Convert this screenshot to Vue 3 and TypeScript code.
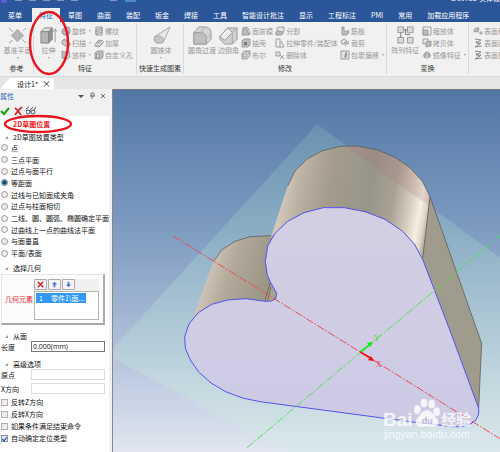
<script setup lang="ts">
import { ref } from 'vue'

interface Shape { d: string; f?: string; s?: string }
interface Tool { label: string; icon: string; menu?: boolean }
interface Group { name: string; big: Tool[]; columns: Tool[][] }

const menus = ['菜单', '特征', '草图', '曲面', '装配', '钣金', '焊接', '工具', '智能设计批注', '显示', '工程标注', 'PMI', '常用', '加载应用程序']
const activeMenu = ref('特征')

const dark = '#9c9c9c'
const mid = '#bcbcbc'
const light = '#e4e4e4'

// Small icons use a 10-unit box, large ones a 20-unit box.
const icons: Record<string, Shape[]> = {
  plane: [
    { d: 'M10 3L17 10L10 17L3 10Z', f: '#b2b2b2' },
    { d: 'M1 2L5 6M15 14L19 18M19 2L16 5M5 15L1 18', s: '#999' },
    { d: 'M6 10H14M10 6V14', s: '#bcbcbc' },
  ],
  extrude: [
    { d: 'M2 6L6 2H14L10 6Z', f: '#dedede', s: '#888' },
    { d: 'M2 6H10V18H2Z', f: '#b5b5b5', s: '#888' },
    { d: 'M10 6L14 2V14L10 18Z', f: '#929292', s: '#888' },
    { d: 'M17 17V4M15 6L17 3L19 6', s: '#999' },
  ],
  cone: [
    { d: 'M19 1L3 11Q1 16 5 18Q10 19 13 15Z', f: '#e6e6e6', s: '#aaa' },
    { d: 'M3 11Q8 9 11 12Q13 14 12 17Q8 20 4 17Q1 14 3 11Z', f: '#c6c6c6', s: '#aaa' },
  ],
  fillet: [
    { d: 'M1 7L6 1H14Q19 2 19 8V14L14 19H1Z', f: '#d6d6d6', s: '#999' },
    { d: 'M1 7H8Q14 7 14 13V19H1Z', f: '#c0c0c0', s: '#999' },
    { d: 'M8 7L12 2M14 13L19 8', s: '#aaa' },
  ],
  chamfer: [
    { d: 'M1 11L9 2H19V14L14 19H6L1 14Z', f: '#d0d0d0', s: '#999' },
    { d: 'M1 11L9 2L14 7L6 15Z', f: '#f0f0f0', s: '#999' },
    { d: 'M14 7V19M14 7L19 2', s: '#a5a5a5' },
  ],
  pattern: [
    { d: 'M2 1H8V7H2ZM12 1H18V7H12ZM2 12H8V18H2ZM12 12H18V18H12Z', f: '#dadada', s: '#999' },
    { d: 'M8 4H12M5 7V12M10 4V9H15', s: '#777' },
  ],
  revolve: [
    { d: 'M1 4L4 1H8L9 4V7L7 9H3L1 7Z', f: mid, s: dark },
    { d: 'M3 5H7V8H3Z', f: light, s: dark },
  ],
  sweep: [
    { d: 'M1 3Q3 0 5 2L9 5Q10 8 7 9L3 7Q0 6 1 3Z', f: mid, s: dark },
    { d: 'M2 4Q5 4 6 8', s: light },
  ],
  loft: [
    { d: 'M1 1L4 2L8 1L9 7L5 9L1 8Z', f: mid, s: dark },
    { d: 'M5 3L7 2L8 7L5 8Z', f: light },
  ],
  thread: [
    { d: 'M2 1H8V9H2Z', f: light, s: dark },
    { d: 'M1 4L9 2M1 6L9 4M1 8L9 6', s: dark },
  ],
  thicken: [
    { d: 'M1 6L5 2L9 3L9 5L5 9L1 8Z', f: mid, s: dark },
    { d: 'M1 6L5 7L9 3', s: light },
  ],
  hole: [
    { d: 'M1 3L4 1H9V7L7 9H1Z', f: mid, s: dark },
    { d: 'M2 4H6V8H2Z', f: dark },
    { d: 'M3 5H5V7H3Z', f: light },
  ],
  draft: [
    { d: 'M2 2L5 1L8 9H1Z', f: mid, s: dark },
    { d: 'M6 1Q9 4 9 9', s: dark },
  ],
  shell: [
    { d: 'M1 3L3 1H9V7L7 9H1Z', f: mid, s: dark },
    { d: 'M3 4H6V7H3Z', f: '#777' },
  ],
  boolean: [
    { d: 'M3 1H9V6L6 9H1V4Z', f: light, s: dark },
    { d: 'M2 4H6V7H2ZM4 2H8V5', s: dark },
  ],
  split: [
    { d: 'M3 1H9V5L7 7H2V3Z', f: light, s: dark },
    { d: 'M1 6Q4 4 8 6V8L5 9H1Z', f: mid, s: dark },
  ],
  stretch: [{ d: 'M1 1H5V9H1ZM6 3L9 9H5', s: dark }],
  remove: [
    { d: 'M1 2H5V6H1Z', f: light, s: dark },
    { d: 'M5 5L9 9M9 5L5 9', s: dark },
  ],
  rib: [{ d: 'M2 1H4V5L6 6L8 4L9 7L7 9H2Z', f: mid, s: dark }],
  trim: [
    { d: 'M1 3L4 1L7 3L5 6L2 6Z', f: light, s: dark },
    { d: 'M4 4L9 6M5 8L9 3', s: dark },
  ],
  wrap: [
    { d: 'M1 1H9V9H1Z', f: light, s: dark },
    { d: 'M5 3L7 2V7L4 8Z', f: dark },
  ],
  scale: [
    { d: 'M1 1H9V9H1Z', s: dark },
    { d: 'M1 4H6V9H1Z', f: mid, s: dark },
  ],
  copy: [
    { d: 'M1 1H6V6H1Z', f: light, s: dark },
    { d: 'M4 4L9 3V8L4 9Z', f: mid, s: dark },
  ],
  mirror: [
    { d: 'M5 1V9', s: dark },
    { d: 'M4 2Q0 5 3 8ZM6 2Q10 5 7 8Z', f: mid, s: dark },
  ],
  surface: [
    { d: 'M1 4Q2 1 6 2L5 6Q2 5 1 6Z', f: mid, s: dark },
    { d: 'M8 5V9M6 7H10', s: dark },
  ],
  offset: [{ d: 'M2 1L8 2L3 5L8 5L2 9L9 8M3 3L7 7', s: '#8c8c8c' }],
}

const groups: Group[] = [
  { name: '参考', big: [{ label: '基准平面', icon: 'plane', menu: true }], columns: [] },
  {
    name: '特征',
    big: [{ label: '拉伸', icon: 'extrude', menu: true }],
    columns: [
      [{ label: '旋转', icon: 'revolve', menu: true }, { label: '扫描', icon: 'sweep', menu: true }, { label: '放样', icon: 'loft', menu: true }],
      [{ label: '螺纹', icon: 'thread' }, { label: '加厚', icon: 'thicken' }, { label: '自定义孔', icon: 'hole' }],
    ],
  },
  { name: '快速生成图素', big: [{ label: '圆锥体', icon: 'cone', menu: true }], columns: [] },
  {
    name: '修改',
    big: [{ label: '圆角过渡', icon: 'fillet' }, { label: '边倒角', icon: 'chamfer' }],
    columns: [
      [{ label: '面拔模', icon: 'draft' }, { label: '抽壳', icon: 'shell' }, { label: '布尔', icon: 'boolean' }],
      [{ label: '分割', icon: 'split' }, { label: '拉伸零件/装配体', icon: 'stretch' }, { label: '删除体', icon: 'remove' }],
      [{ label: '筋板', icon: 'rib' }, { label: '裁剪', icon: 'trim' }, { label: '包裹偏移', icon: 'wrap', menu: true }],
    ],
  },
  {
    name: '变换',
    big: [{ label: '阵列特征', icon: 'pattern' }],
    columns: [[{ label: '缩放体', icon: 'scale' }, { label: '拷贝体', icon: 'copy' }, { label: '镜像特征', icon: 'mirror', menu: true }]],
  },
  {
    name: '',
    big: [],
    columns: [[{ label: '表面移', icon: 'surface' }, { label: '表面匹', icon: 'offset' }, { label: '表面替', icon: 'offset' }]],
  },
]

const placements = ['点', '三点平面', '过点与面平行', '等距面', '过线与已知面成夹角', '过点与柱面相切', '二线、圆、圆弧、椭圆确定平面', '过曲线上一点的曲线法平面', '与面垂直', '平面/表面']
const placement = ref('等距面')
const length = ref('0.000(mm)')
const origin = ref('')
const xDirection = ref('')
const options = ref([
  { label: '反转Z方向', on: false },
  { label: '反转X方向', on: false },
  { label: '如果条件满足结束命令', on: false },
  { label: '自动确定定位类型', on: true },
])
</script>

<template>
  <div class="app">
    <header class="titlebar">
      <span class="orb"></span>
      <span class="quick"><i></i><i></i><i></i><i></i><i></i></span>
      <span class="quick far"><i></i><i class="lit"></i></span>
      <span class="title">CAXA 3D 实体设</span>
    </header>

    <nav class="menus">
      <button v-for="m in menus" :key="m" :class="{ active: m === activeMenu }" @click="activeMenu = m">{{ m }}</button>
    </nav>

    <section class="ribbon">
      <div v-for="(g, gi) in groups" :key="gi" class="group">
        <div class="tools">
          <button v-for="b in g.big" :key="b.label" class="big">
            <svg viewBox="0 0 20 20"><path v-for="(p, i) in icons[b.icon]" :key="i" :d="p.d" :fill="p.f ?? 'none'" :stroke="p.s ?? 'none'" /></svg>
            <span>{{ b.label }}</span>
            <span v-if="b.menu" class="caret"></span>
          </button>
          <div v-for="(c, ci) in g.columns" :key="ci" class="column">
            <button v-for="t in c" :key="t.label" class="small">
              <svg viewBox="0 0 10 10"><path v-for="(p, i) in icons[t.icon]" :key="i" :d="p.d" :fill="p.f ?? 'none'" :stroke="p.s ?? 'none'" /></svg>
              <span>{{ t.label }}</span>
              <span v-if="t.menu" class="caret"></span>
            </button>
          </div>
        </div>
        <div class="group-name">{{ g.name }}</div>
      </div>
      <svg class="mark mark-tool" viewBox="0 0 42 66"><ellipse cx="21" cy="33" rx="19" ry="31" /></svg>
    </section>

    <div class="documents">
      <div class="document"><span>设计1*</span><button aria-label="关闭文档">×</button></div>
    </div>

    <main class="work">
      <aside class="panel">
        <div class="panel-head">
          <h1>属性</h1>
          <button aria-label="选项"><svg viewBox="0 0 8 8"><path d="M1 3H7L4 6Z" fill="#555" /></svg></button>
          <button aria-label="固定"><svg viewBox="0 0 8 8"><path d="M3 1H6V4H3ZM2 4H7M4 4V7" fill="none" stroke="#777" /></svg></button>
          <button aria-label="关闭"><svg viewBox="0 0 8 8"><path d="M2 2L6 6M6 2L2 6" fill="none" stroke="#666" /></svg></button>
        </div>
        <div class="actions">
          <button aria-label="确定"><svg viewBox="0 0 10 10"><path d="M1 5L4 8L9 2" fill="none" stroke="#16a016" stroke-width="2" /></svg></button>
          <button aria-label="取消"><svg viewBox="0 0 10 10"><path d="M2 2Q5 4 8 9M9 1Q5 4 2 9" fill="none" stroke="#cf2a2a" stroke-width="1.6" /></svg></button>
          <button aria-label="预览"><svg viewBox="0 0 10 10"><path d="M0 3L3 1M2 4A2 2 0 1 0 2 8A2 2 0 1 0 2 4M7 4A2 2 0 1 0 7 8A2 2 0 1 0 7 4M3 5H5M8 4L10 1M4 4L7 1" fill="none" stroke="#456" /></svg></button>
        </div>

        <div class="content">
          <h2 class="mode">2D草图位置
            <svg class="mark mark-mode" viewBox="0 0 70 20"><ellipse cx="35" cy="10" rx="33" ry="8" /></svg>
          </h2>
          <h3>2D草图放置类型</h3>
          <div class="radios">
            <label v-for="p in placements" :key="p"><input v-model="placement" type="radio" name="placement" :value="p" /><span>{{ p }}</span></label>
          </div>

          <h3 class="pick-title">选择几何</h3>
          <div class="pick">
            <span class="pick-label">几何元素</span>
            <div class="pick-main">
              <div class="pick-bar">
                <button aria-label="删除"><svg viewBox="0 0 10 10"><path d="M2 2L8 8M8 2L2 8" fill="none" stroke="#e01818" stroke-width="1.5" /></svg></button>
                <button aria-label="上移"><svg viewBox="0 0 10 10"><path d="M5 2L8 5H6V8H4V5H2Z" fill="#4a78d8" /></svg></button>
                <button aria-label="下移"><svg viewBox="0 0 10 10"><path d="M5 8L8 5H6V2H4V5H2Z" fill="#4a78d8" /></svg></button>
              </div>
              <ul role="listbox" aria-label="几何元素"><li role="option" aria-selected="true"><span>1</span><span>零件1\面...</span></li></ul>
            </div>
          </div>

          <h3 class="from-title">从面</h3>
          <label class="field"><span>长度</span><input v-model="length" type="text" class="strong" /></label>
          <h3 class="more-title">高级选项</h3>
          <label class="field"><span>原点</span><input v-model="origin" type="text" /></label>
          <label class="field second"><span>X方向</span><input v-model="xDirection" type="text" /></label>
          <div class="checks">
            <label v-for="o in options" :key="o.label"><input v-model="o.on" type="checkbox" /><span>{{ o.label }}</span></label>
          </div>
        </div>
      </aside>

      <div class="viewport">
        <svg viewBox="24 0 1161 1086" preserveAspectRatio="xMinYMin slice">
          <defs>
            <linearGradient id="sky" x1="0" y1="0" x2="0" y2="1">
              <stop offset="0" stop-color="#5277a5" />
              <stop offset=".4" stop-color="#809dc2" />
              <stop offset=".7" stop-color="#afbfd9" />
              <stop offset="1" stop-color="#e1e6f0" />
            </linearGradient>
            <linearGradient id="sheet" x1="0" y1="0" x2="0" y2="1">
              <stop offset="0" stop-color="#8ec4c0" stop-opacity=".25" />
              <stop offset=".6" stop-color="#b8dcd4" stop-opacity=".4" />
              <stop offset="1" stop-color="#d4ece6" stop-opacity=".5" />
            </linearGradient>
            <linearGradient id="barrel" gradientUnits="userSpaceOnUse" x1="526" y1="345" x2="964" y2="425">
              <stop offset="0" stop-color="#d3c8bb" />
              <stop offset=".1" stop-color="#bdb3a5" />
              <stop offset=".3" stop-color="#a49c8e" />
              <stop offset=".58" stop-color="#97958a" />
              <stop offset=".74" stop-color="#a9a294" />
              <stop offset=".86" stop-color="#d6cec0" />
              <stop offset=".93" stop-color="#f5efe2" />
              <stop offset=".97" stop-color="#dfd7c8" />
              <stop offset="1" stop-color="#b3ac9b" />
            </linearGradient>
            <linearGradient id="lobe" gradientUnits="userSpaceOnUse" x1="292" y1="590" x2="490" y2="650">
              <stop offset="0" stop-color="#cfc5b8" />
              <stop offset=".35" stop-color="#b1a899" />
              <stop offset="1" stop-color="#969282" />
            </linearGradient>
            <linearGradient id="face" x1="0" y1="0" x2="0" y2="1">
              <stop offset="0" stop-color="#d2cfe2" />
              <stop offset="1" stop-color="#cdcae5" />
            </linearGradient>
          </defs>
          <rect x="24" width="1161" height="1086" fill="url(#sky)" />
          <path d="M636 103L1185 503V1086H550L24 805V775Z" fill="url(#sheet)" />

          <path d="M325 515L350 480L390 454L435 440L498 437L520 560L515 640H420L262 690Z" fill="url(#lobe)" />
          <path d="M496 578L482 632L506 634L516 610Z" fill="#aaa18f" />
          <path d="M498 440L548 288L570 243L605 208L650 183L705 169L757 168L818 180L870 202L915 233L952 274L975 320L953 508L720 560L510 430Z" fill="url(#barrel)" />
          <path d="M720 168L757 168L818 180L870 202L915 233L952 274L975 320L974 349Z" fill="#a96f78" fill-opacity=".2" />
          <path d="M975 320L1130 760L1121 960L953 508Z" fill="#9f9b8d" />
          <path d="M325 515L350 480L390 454L435 440L498 437M548 288L570 243L605 208L650 183L705 169L757 168L818 180L870 202L915 233L952 274L975 320L1130 760L1121 955M975 320L953 505M496 578L480 632M498 590L488 632" fill="none" stroke="#50514c" stroke-width="2" />

          <path d="M510 430L548 394L597 368L655 353L718 353L780 365L840 388L893 424L928 462L953 508L1040 735L1121 955V972L1113 990L1095 1003L1068 1010L1045 1010L930 997L465 935L413 924L362 905L318 879L281 846L256 810L241 775L239 740L252 702L280 668L320 643L368 630L423 626L480 634L500 633L512 626L515 610L497 578L487 555L481 515L488 468Z" fill="url(#face)" stroke="#5452ee" stroke-width="3" stroke-linejoin="round" />

          <path d="M206 439L1185 1046" stroke="#ec4b52" stroke-width="3" stroke-dasharray="24 5 5 5" />
          <path d="M426 1073L1185 437" stroke="#4fe052" stroke-width="3" stroke-dasharray="24 5 5 5" />
          <path d="M766 786L795 763" stroke="#08f008" stroke-width="5" />
          <path d="M804 755L796 771L786 759Z" fill="#08f008" />
          <path d="M766 786L795 803" stroke="#f80808" stroke-width="5" />
          <path d="M808 813L789 811L798 798Z" fill="#f80808" />
          <text x="807" y="752" class="axis y-axis">Y</text>
          <text x="813" y="830" class="axis x-axis">X</text>

          <g fill="#fff" fill-opacity=".8">
            <text x="834" y="1008" class="brand">Bai</text>
            <ellipse cx="937" cy="959" rx="10" ry="13" />
            <ellipse cx="957" cy="939" rx="10" ry="13" />
            <ellipse cx="980" cy="942" rx="10" ry="13" />
            <ellipse cx="995" cy="965" rx="10" ry="13" />
            <path d="M966 961C951 961 948 975 938 983C925 996 935 1013 952 1010Q967 1006 982 1010C999 1013 1006 996 994 984C984 975 981 961 966 961Z" />
            <text x="1009" y="1004" class="brand-cn">经验</text>
            <text x="837" y="1044" class="site">jingyan.baidu.com</text>
          </g>
          <text x="950" y="1001" class="du">du</text>
        </svg>
      </div>
    </main>
  </div>
</template>

<style>
body {
  margin: 0;
}
</style>

<style scoped>
.app {
  display: flex;
  flex-direction: column;
  min-height: 100vh;
  overflow: hidden;
  background: #e5e5e5;
  color: #111;
  font-family: "Noto Sans CJK SC", "Liberation Sans", sans-serif;
  font-size: 7px;
  line-height: 10px;
}
button {
  margin: 0;
  padding: 0;
  border: 0;
  background: none;
  color: inherit;
  font: inherit;
  white-space: nowrap;
}
h1, h2, h3 {
  margin: 0;
  font-size: 7px;
  font-weight: 400;
}
svg {
  display: block;
}

.titlebar {
  display: flex;
  align-items: flex-end;
  height: 3px;
  overflow: hidden;
  background: #2b579a;
  color: #fff;
}
.orb {
  width: 6px;
  height: 6px;
  margin-left: 1px;
  border-radius: 50%;
  background: #5a5fe0;
}
.quick {
  display: flex;
  gap: 7px;
  height: 3px;
  margin-left: 8px;
}
.quick.far {
  gap: 8px;
  margin-left: 32px;
}
.quick i {
  width: 7px;
  height: 1px;
  background: #8299bd;
}
.quick .lit {
  width: 11px;
  height: 2px;
  background: #4d8bc9;
}
.title {
  margin-left: auto;
  white-space: nowrap;
}

.menus {
  display: flex;
  height: 19px;
  background: #2b579a;
  color: #fff;
}
.menus button {
  flex: none;
  margin: 5px 0 0 1px;
  padding: 0 7px;
}
.menus button:first-child {
  margin-right: 2px;
}
.menus .active {
  background: #f1f1f1;
  color: #2b6cc0;
}

.ribbon {
  position: relative;
  display: grid;
  grid-template-columns: 34px 103px 47px 203px 82px 1fr;
  height: 54px;
  border-bottom: 1px solid #dcdcdc;
  background: #f1f1f1;
  color: #989898;
}
.group {
  display: flex;
  flex-direction: column;
  min-width: 0;
  margin: 2px 0;
  border-right: 1px solid #d9d9d9;
}
.group:last-of-type {
  overflow: hidden;
  border-right: 0;
}
.tools {
  display: flex;
  flex: 1;
  justify-content: space-evenly;
  padding-left: 2px;
}
.group:last-of-type .tools {
  justify-content: flex-start;
  padding-left: 4px;
}
.big {
  display: flex;
  flex-direction: column;
  align-items: center;
  padding-top: 2px;
}
.big svg {
  width: 19px;
  height: 19px;
}
.column {
  display: grid;
  grid-template-rows: repeat(3, 12px);
  align-content: start;
  padding-top: 1px;
}
.small {
  display: flex;
  align-items: center;
  gap: 1px;
}
.small svg {
  flex: none;
  width: 10px;
  height: 10px;
}
.caret {
  width: 0;
  height: 0;
  border: 1px solid transparent;
  border-top: 2px solid #a3a3a3;
}
.big .caret {
  margin-top: 2px;
}
.small .caret {
  margin-left: 2px;
}
.group-name {
  height: 10px;
  margin-bottom: 1px;
  color: #333;
  text-align: center;
  white-space: nowrap;
}
.mark {
  position: absolute;
  overflow: visible;
  pointer-events: none;
}
.mark ellipse {
  fill: none;
  stroke: #e8141e;
  stroke-width: 2.4;
}
.mark-tool {
  top: -12px;
  left: 28px;
  width: 42px;
  height: 66px;
}

.documents {
  height: 12px;
  padding-top: 1px;
  box-sizing: border-box;
}
.document {
  display: flex;
  align-items: center;
  justify-content: space-between;
  width: 54px;
  height: 11px;
  padding: 0 3px 0 17px;
  box-sizing: border-box;
  background: #fff;
  clip-path: polygon(10px 0, 100% 0, 100% 100%, 0 100%);
}
.document button {
  font-size: 9px;
}

.work {
  display: grid;
  grid-template-columns: 113px 1fr;
  flex: 1;
}
.panel {
  display: flex;
  flex-direction: column;
  border-right: 1px solid #888;
  background: #f1f1f1;
}
.panel-head {
  display: flex;
  align-items: center;
  gap: 3px;
  height: 14px;
  padding-right: 5px;
}
.panel-head h1 {
  flex: 1;
  color: #2b6cc0;
}
.panel-head svg {
  width: 8px;
  height: 8px;
}
.actions {
  display: flex;
  gap: 2px;
  height: 13px;
  padding-top: 2px;
  box-sizing: border-box;
}
.actions svg {
  width: 10px;
  height: 10px;
}
.actions button {
  width: 11px;
}
.content {
  flex: 1;
  margin-right: 3px;
  padding: 3px 4px 0 1px;
  background: #fff;
}
.mode {
  position: relative;
  padding-left: 12px;
  color: #f01818;
  font-weight: 700;
}
.mark-mode {
  top: -5px;
  left: 2px;
  width: 70px;
  height: 20px;
}
h3 {
  position: relative;
  padding-left: 12px;
  margin-top: 3px;
}
h3::before {
  content: "";
  position: absolute;
  top: 4px;
  left: 4px;
  border-left: 3px solid transparent;
  border-bottom: 3px solid #999;
}
.radios {
  display: grid;
  grid-auto-rows: 1fr;
  height: 117px;
}
.radios label,
.checks label {
  display: flex;
  align-items: center;
  gap: 3px;
  white-space: nowrap;
}
input {
  margin: 0;
  box-sizing: border-box;
  appearance: none;
  font: inherit;
  color: inherit;
}
.radios input {
  flex: none;
  width: 7px;
  height: 7px;
  border: 1px solid #999;
  border-radius: 50%;
  background: #ececec;
}
.radios input:checked {
  border-color: #5b7f93;
  background: radial-gradient(circle, #123a5c 1px, #8ed0ee 3px);
}
.pick-title {
  margin-top: 4px;
}
.pick {
  display: flex;
  align-items: center;
  justify-content: space-between;
  height: 51px;
  margin-top: 1px;
  padding: 0 4px 0 3px;
  box-sizing: border-box;
  border: 1px solid #e4e4e4;
  border-right: 2px solid #aaa;
  border-bottom: 2px solid #aaa;
  background: #fafcfe;
}
.pick-label {
  color: #f02020;
}
.pick-main {
  width: 65px;
}
.pick-bar {
  display: flex;
  gap: 1px;
  height: 12px;
  background: #f0f0f0;
}
.pick-bar button {
  display: grid;
  place-items: center;
  width: 13px;
  height: 11px;
  box-sizing: border-box;
  border: 1px solid #aaa;
  border-radius: 1px;
  background: #f4f4f4;
}
.pick-bar svg {
  width: 9px;
  height: 9px;
}
.pick ul {
  height: 29px;
  margin: 0;
  padding: 1px;
  box-sizing: border-box;
  border: 1px solid #b5b5b5;
  background: #fff;
  list-style: none;
}
.pick li {
  display: flex;
  gap: 8px;
  width: 50px;
  padding-left: 3px;
  box-sizing: border-box;
  background: #3399f8;
  color: #fff;
  white-space: nowrap;
}
.from-title {
  margin-top: 6px;
}
.field {
  display: grid;
  grid-template-columns: 30px 1fr;
  align-items: center;
}
.field input {
  width: 100%;
  height: 11px;
  padding: 0 1px;
  border: 1px solid #ddd;
  background: #fff;
}
.field .strong {
  border-color: #777;
  font-family: "Open Sans", sans-serif;
  font-size: 7px;
}
.more-title {
  margin-top: 7px;
}
.field.second {
  margin-top: 3px;
}
.checks {
  display: grid;
  grid-auto-rows: 12px;
  margin-top: 2px;
}
.checks input {
  display: grid;
  place-items: center;
  width: 7px;
  height: 7px;
  border: 1px solid #b0b0b0;
  background: #eee;
}
.checks input:checked {
  border-color: #8a9ab0;
  background: #dfe8f5;
}
.checks input:checked::after {
  content: "";
  width: 2px;
  height: 4px;
  border: solid #1b3f94;
  border-width: 0 1px 1px 0;
  transform: rotate(40deg);
}

.viewport {
  position: relative;
  min-width: 0;
  border-top: 1px solid #777;
}
.viewport svg {
  position: absolute;
  inset: 0;
  width: 100%;
  height: 100%;
}
.axis {
  font-family: "Liberation Serif", serif;
  font-size: 24px;
}
.y-axis {
  fill: #3fe043;
}
.x-axis {
  fill: #ee3a40;
}
.brand {
  font-family: "Liberation Sans", sans-serif;
  font-size: 57px;
  font-weight: 700;
}
.brand-cn {
  font-size: 45px;
  font-weight: 700;
}
.site {
  font-family: "Liberation Sans", sans-serif;
  font-size: 32px;
}
.du {
  fill: #b9b6d8;
  font-family: "Liberation Sans", sans-serif;
  font-size: 27px;
  font-weight: 700;
}
</style>
